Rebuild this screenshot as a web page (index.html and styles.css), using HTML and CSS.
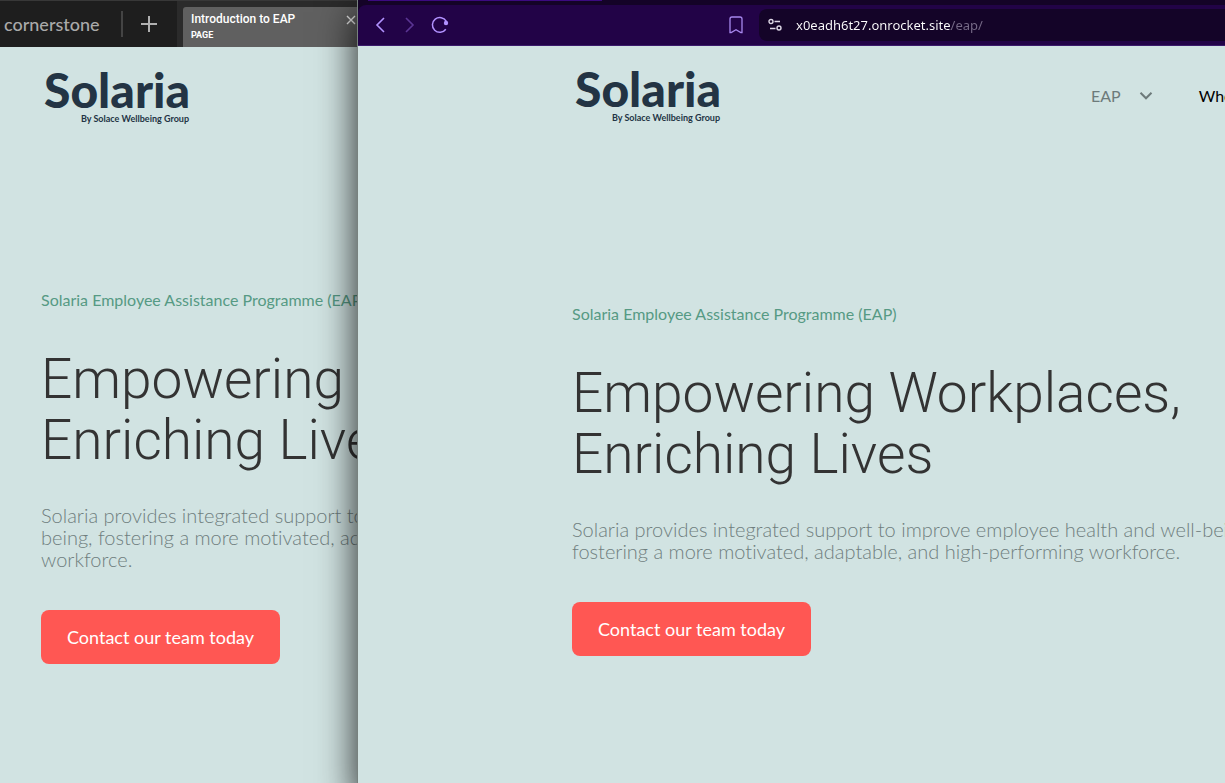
FILE: index.html
```
<!DOCTYPE html>
<html lang="en">
<head>
	<meta charset="UTF-8">
	<meta name="viewport" content="width=device-width, initial-scale=1">
	<title>Introduction to EAP</title>
	<link rel="stylesheet" href="styles.css">
</head>
<body>
<div class="desktop">
	<!-- editor window -->
	<div class="window editor">
		<div class="editor_bar">
			<div class="editor_menu">
				<a href="#" class="brand">cornerstone</a>
				<span class="bar_line"></span>
				<button type="button" class="icon_btn" aria-label="Add">
					<svg width="16" height="16" viewBox="0 0 16 16"><path d="M8 0v16M0 8h16" stroke="#b0b0b0" stroke-width="2" fill="none"/></svg>
				</button>
			</div>
			<div class="doc_tab">
				<div class="doc_name">
					<p class="doc_title">Introduction to EAP</p>
					<p class="doc_type">PAGE</p>
				</div>
				<button type="button" class="icon_btn doc_close" aria-label="Close">
					<svg width="10" height="10" viewBox="0 0 10 10"><path d="M1 1l8 8M9 1l-8 8" stroke="#e8e8e8" stroke-width="1.4" fill="none"/></svg>
				</button>
			</div>
		</div>
		<div class="page">
			<div class="page_header">
				<a href="#" class="logo">
					<span class="logo_name">Solaria</span>
					<span class="logo_desc">By Solace Wellbeing Group</span>
				</a>
			</div>
			<div class="hero">
				<p class="hero_label">Solaria Employee Assistance Programme (EAP)</p>
				<h1 class="hero_title">Empowering Workplaces,<br>Enriching Lives</h1>
				<p class="hero_desc">Solaria provides integrated support to improve employee health and well-<br>being, fostering a more motivated, adaptable, and high-performing<br>workforce.</p>
				<a href="#" class="hero_btn">Contact our team today</a>
			</div>
		</div>
	</div>

	<!-- browser window -->
	<div class="window browser">
		<div class="browser_tabs"><div class="tab_active"></div></div>
		<div class="browser_bar">
			<div class="browser_nav">
				<button type="button" class="icon_btn" aria-label="Back">
					<svg width="14" height="16" viewBox="0 0 14 16"><path d="M9 1L2 8l7 7" stroke="#b292ff" stroke-width="1.6" fill="none"/></svg>
				</button>
				<button type="button" class="icon_btn" aria-label="Forward">
					<svg width="10" height="16" viewBox="0 0 10 16"><path d="M1 1l7 7-7 7" stroke="#5b3594" stroke-width="1.6" fill="none"/></svg>
				</button>
				<button type="button" class="icon_btn" aria-label="Reload">
					<svg width="18" height="18" viewBox="0 0 18 18"><path d="M14.8 13.3A7.4 7.4 0 1 1 15.2 5.2" stroke="#b292ff" stroke-width="1.5" fill="none"/><circle cx="15" cy="7" r="2.2" fill="#b292ff"/></svg>
				</button>
			</div>
			<button type="button" class="icon_btn bookmark" aria-label="Bookmark">
				<svg width="14" height="18" viewBox="0 0 14 18"><path d="M3 1h8a2 2 0 0 1 2 2v13.5h-1.2L7 13.8l-4.8 2.7H1V3a2 2 0 0 1 2-2z" stroke="#a787ee" stroke-width="1.3" fill="none"/></svg>
			</button>
			<div class="address">
				<svg width="14" height="14" viewBox="0 0 14 14" fill="none" stroke="#ded8e6" stroke-width="1.4"><circle cx="3" cy="3.5" r="2"/><path d="M6.5 3.5H12M2 10.5h5.5"/><circle cx="11" cy="10" r="2"/></svg>
				<input type="text" class="address_input" aria-label="Address" value="x0eadh6t27.onrocket.site/eap/">
			</div>
		</div>
		<div class="page">
			<div class="page_header">
				<a href="#" class="logo">
					<span class="logo_name">Solaria</span>
					<span class="logo_desc">By Solace Wellbeing Group</span>
				</a>
				<nav class="gnb">
					<a href="#" class="gnb_item on">EAP
						<svg width="14" height="10" viewBox="0 0 14 10"><path d="M1.5 1.8L7 7.3l5.500-5.500" stroke="#6d7a7a" stroke-width="2" fill="none"/></svg>
					</a>
					<a href="#" class="gnb_item">Who</a>
				</nav>
			</div>
			<div class="hero">
				<p class="hero_label">Solaria Employee Assistance Programme (EAP)</p>
				<h1 class="hero_title">Empowering Workplaces,<br>Enriching Lives</h1>
				<p class="hero_desc">Solaria provides integrated support to improve employee health and well-being,<br>fostering a more motivated, adaptable, and high-performing workforce.</p>
				<a href="#" class="hero_btn">Contact our team today</a>
			</div>
		</div>
	</div>
</div>
</body>
</html>
```

FILE: styles.css
```
body,h1,p,input,button{margin:0;padding:0}
*{box-sizing:border-box}
button{border:0 none;background-color:transparent;cursor:pointer}
a{color:inherit;text-decoration:none}
svg{display:block}
body{background:#d1e3e2;font-family:Lato,sans-serif;font-variant-ligatures:none;color:#333}

.desktop{display:flex;min-height:100vh;overflow:hidden}
.window{display:flex;flex-direction:column;overflow:hidden;white-space:nowrap}
.icon_btn{display:flex;align-items:center;justify-content:center;flex:none}

/* editor window */
.editor{flex:0 0 358px}
.editor_bar{display:flex;height:47px;background:#2b2b2b;border-top:1px solid #383838}
.editor_menu{display:flex;align-items:center;width:177px;padding-left:4px;background:#1e1e1e}
.brand{width:117px;font-size:18px;line-height:24px;font-weight:500;color:#aaa}
.bar_line{width:2px;height:26px;margin-right:18px;background:#444}
.doc_tab{display:flex;flex:1;justify-content:space-between;margin:6px 0 0 6px;padding:4px 2px 0 8px;border-radius:3px 0 0 0;background:#606060;color:#fff}
.doc_name{font-family:Roboto,sans-serif}
.doc_title{font-size:12px;line-height:16px;font-weight:500}
.doc_type{font-size:9px;line-height:16px;font-weight:700}
.doc_close{height:18px}

/* browser window */
.browser{position:relative;flex:1;min-width:0;overflow:visible;background:#140327;box-shadow:0 0 0 1px #78827f,0 16px 34px 4px rgba(0,0,0,.75)}
.browser_tabs{height:5px;padding-left:10px;background:#140327}
.tab_active{width:234px;height:1px;background:#3c0a80}
.browser_bar{display:flex;align-items:center;height:41px;padding-left:17px;background:#220347;border-bottom:1px solid #3b1a6b;border-radius:8px 0 0 0}
.browser_nav{display:flex;gap:16px;flex:1}
.bookmark{margin-right:16px}
.address{display:flex;align-items:center;gap:14px;width:466px;height:32px;padding-left:9px;border-radius:8px 0 0 8px;background:#140428}
.address_input{flex:1;border:0 none;outline:0;font-family:'Noto Sans',sans-serif;font-size:13px;line-height:20px;color:transparent;background:linear-gradient(to right,#fff 155px,#776b88 155px);-webkit-background-clip:text;background-clip:text}

/* site */
.page{flex:1;padding-left:41px;background:#d1e3e2}
.browser .page{padding-left:214px;overflow:hidden}
.page_header{display:flex;align-items:flex-start;height:240px;padding:19px 0 0 3px}
.browser .page_header{height:255px}
.logo{flex:none;width:145px;color:#233444;text-align:right}
.logo_name{display:block;font-size:48px;line-height:48px;font-weight:900}
.logo_desc{display:block;font-size:9px;line-height:9px;font-weight:700}
.gnb{display:flex;gap:46px;margin:20px 0 0 371px}
.gnb_item{display:flex;align-items:center;gap:18px;font-size:16px;line-height:22px;color:#000}
.gnb_item.on{color:#6d7a7a}
.hero_label{font-size:16px;line-height:26px;color:#569a84}
.hero_title{margin-top:36px;font-family:Roboto,sans-serif;font-size:55px;line-height:61px;font-weight:300}
.hero_desc{margin-top:33px;font-size:20px;line-height:22px;font-weight:300;color:#6f7e7e}
.hero_btn{display:inline-block;margin-top:40px;padding:0 26px;border-radius:8px;background:#ff5753;font-size:18px;line-height:54px;color:#fff}
```
